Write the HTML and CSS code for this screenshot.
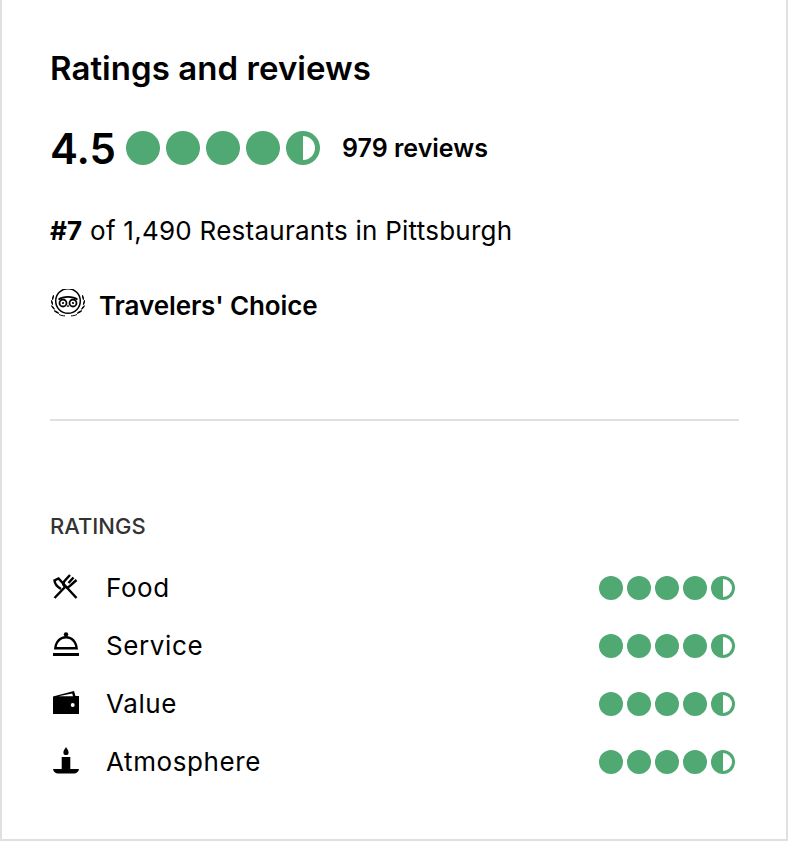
FILE: index.html
```html
<!DOCTYPE html>
<html lang="en">

<head>
  <meta charset="UTF-8">
  <title>Ratings and reviews</title>
  <link rel="stylesheet" href="styles.css">
</head>

<body>
  <section class="card">
    <h2 class="card-title">Ratings and reviews</h2>

    <div class="summary">
      <span class="score">4.5</span>
      <span class="bubbles bubbles-lg">
        <i class="bubble"></i><i class="bubble"></i><i class="bubble"></i><i class="bubble"></i><i class="bubble half"></i>
      </span>
      <span class="count">979 reviews</span>
    </div>

    <p class="rank"><b>#7</b> of 1,490 Restaurants in Pittsburgh</p>

    <div class="award">
      <svg class="award-icon" viewBox="0 0 36 32" width="36" height="32" fill="none" stroke="#000">
        <circle cx="18" cy="12" r="12.300" stroke-width="1.500" />
        <path d="M8.500 10.500c2.500-1.800 6-2.600 9.500-2.600s7 .8 9.500 2.600" stroke-width="1.700" />
        <circle cx="13" cy="14" r="3.500" stroke-width="1.800" />
        <circle cx="23" cy="14" r="3.500" stroke-width="1.800" />
        <circle cx="13" cy="14" r="1.100" fill="#000" stroke="none" />
        <circle cx="23" cy="14" r="1.100" fill="#000" stroke="none" />
        <path d="M18 15.500l-1.300 2.300h2.600z" fill="#000" stroke="none" />
        <!-- laurel leaves -->
        <g fill="#000" stroke="none">
          <ellipse cx="3" cy="8.500" rx="0.800" ry="2.600" transform="rotate(15 3 8.500)" />
          <ellipse cx="2" cy="13.500" rx="0.800" ry="2.600" transform="rotate(-15 2 13.500)" />
          <ellipse cx="3" cy="18.500" rx="0.800" ry="2.800" transform="rotate(-40 3 18.500)" />
          <ellipse cx="6.500" cy="23" rx="0.800" ry="3" transform="rotate(-60 6.500 23)" />
          <ellipse cx="33" cy="8.500" rx="0.800" ry="2.600" transform="rotate(-15 33 8.500)" />
          <ellipse cx="34" cy="13.500" rx="0.800" ry="2.600" transform="rotate(15 34 13.500)" />
          <ellipse cx="33" cy="18.500" rx="0.800" ry="2.800" transform="rotate(40 33 18.500)" />
          <ellipse cx="29.500" cy="23" rx="0.800" ry="3" transform="rotate(60 29.500 23)" />
        </g>
        <path d="M9 25.500c2 1 4 1.300 6 1.400M27 25.500c-2 1-4 1.300-6 1.400" stroke-width="1" />
      </svg>
      <span>Travelers' Choice</span>
    </div>

    <hr class="divider">

    <h3 class="ratings-title">RATINGS</h3>
    <ul class="ratings">
      <li class="rating-row">
        <svg class="rating-icon" viewBox="0 0 28 28" width="28" height="28" fill="none" stroke="#000" stroke-width="2.500">
          <path d="M2.500 25L14 13" />
          <path d="M18 2L12.500 8c-1.500 1.700-1.500 3.700 0 5.200s3.700 1.500 5.200 0L24.500 7M21.500 4.500l-5 5.500" />
          <path d="M24.500 25L6.500 5.500 2.500 7.500c.3 3.500 3 6.500 6.500 8.500" />
        </svg>
        <span class="rating-label">Food</span>
        <span class="bubbles bubbles-sm">
          <i class="bubble"></i><i class="bubble"></i><i class="bubble"></i><i class="bubble"></i><i class="bubble half"></i>
        </span>
      </li>
      <li class="rating-row">
        <svg class="rating-icon" viewBox="0 0 28 28" width="28" height="28">
          <circle cx="14" cy="3.500" r="2.200" />
          <path d="M14 5c6.500 0 11.500 4.800 12 13.500H2C2.500 9.800 7.500 5 14 5zM14 7.500c-4.500 0-8.300 3-9.300 8.500h18.600c-1-5.500-4.800-8.500-9.300-8.500z" fill-rule="evenodd" />
          <rect x="1" y="22" width="26" height="3" />
        </svg>
        <span class="rating-label">Service</span>
        <span class="bubbles bubbles-sm">
          <i class="bubble"></i><i class="bubble"></i><i class="bubble"></i><i class="bubble"></i><i class="bubble half"></i>
        </span>
      </li>
      <li class="rating-row">
        <svg class="rating-icon" viewBox="0 0 28 28" width="28" height="28">
          <path fill-rule="evenodd" d="M1 7.500L22 2l1.500 5H27v18H1zM6.500 7.300h14.500l-.8-2.800zM20.700 14a2 2 0 1 0 0 4 2 2 0 0 0 0-4z" />
        </svg>
        <span class="rating-label">Value</span>
        <span class="bubbles bubbles-sm">
          <i class="bubble"></i><i class="bubble"></i><i class="bubble"></i><i class="bubble"></i><i class="bubble half"></i>
        </span>
      </li>
      <li class="rating-row">
        <svg class="rating-icon" viewBox="0 0 28 28" width="28" height="28">
          <path d="M14 0c1.200 2.200 2.600 3.600 2.600 5.400a2.600 2.600 0 0 1-5.200 0C11.400 3.600 12.800 2.200 14 0z" />
          <rect x="9.700" y="10" width="8.600" height="13" />
          <path d="M1 22h26c-.5 2.800-2.500 4.500-5 4.500H6C3.500 26.500 1.500 24.800 1 22z" />
        </svg>
        <span class="rating-label">Atmosphere</span>
        <span class="bubbles bubbles-sm">
          <i class="bubble"></i><i class="bubble"></i><i class="bubble"></i><i class="bubble"></i><i class="bubble half"></i>
        </span>
      </li>
    </ul>
  </section>
</body>

</html>
```

FILE: styles.css
```css
* {
  box-sizing: border-box;
}

body {
  margin: 0;
  background-color: #fff;
  color: #000;
  font-family: "Inter", "Liberation Sans", sans-serif;
}

.card {
  height: 841px;
  padding: 47px 47px 0 48px;
  border-left: 2px solid #e0e0e0;
  border-right: 2px solid #e0e0e0;
  border-bottom: 2px solid #e0e0e0;
}

.card-title {
  margin: 0;
  font-size: 33px;
  line-height: 42px;
  font-weight: 600;
  letter-spacing: 0.05px;
}

.summary {
  display: flex;
  align-items: center;
  height: 52px;
  margin-top: 33px;
}

.score {
  font-size: 42px;
  font-weight: 600;
  width: 76px;
}

.bubbles {
  display: flex;
}

.bubble {
  display: block;
  border-radius: 50%;
  background-color: #50a873;
}

.bubble.half {
  position: relative;
}

/* the empty half of the last bubble */
.bubble.half::after {
  content: "";
  position: absolute;
  top: 14%;
  right: 14%;
  bottom: 14%;
  left: 50%;
  background-color: #fff;
  border-radius: 0 999px 999px 0;
}

.bubbles-lg {
  gap: 6px;
}

.bubbles-lg .bubble {
  width: 34px;
  height: 34px;
}

.bubbles-sm {
  gap: 4px;
  margin-top: 2px;
  margin-left: auto;
  margin-right: 4px;
}

.bubbles-sm .bubble {
  width: 24px;
  height: 24px;
}

.count {
  margin-left: 22px;
  font-size: 25px;
  font-weight: 600;
}

.rank {
  margin: 39px 0 0;
  font-size: 26px;
  line-height: 36px;
  letter-spacing: 0.25px;
}

.rank b {
  font-weight: 700;
}

.award {
  display: flex;
  align-items: center;
  gap: 13px;
  margin-top: 40px;
  font-size: 26px;
  font-weight: 600;
  letter-spacing: -0.1px;
}

.divider {
  height: 2px;
  margin: 98px 0 0;
  border: 0;
  background-color: #e0e0e0;
}

.ratings-title {
  margin: 91px 0 0;
  font-size: 22px;
  line-height: 28px;
  font-weight: 500;
  color: #333;
}

.ratings {
  margin: 18px 0 0;
  padding: 0;
  list-style: none;
}

.rating-row {
  display: flex;
  align-items: center;
  height: 58px;
}

.rating-icon {
  flex: none;
  margin-left: 2px;
  margin-right: 26px;
}

.rating-label {
  font-size: 26px;
  letter-spacing: 0.6px;
}
```
